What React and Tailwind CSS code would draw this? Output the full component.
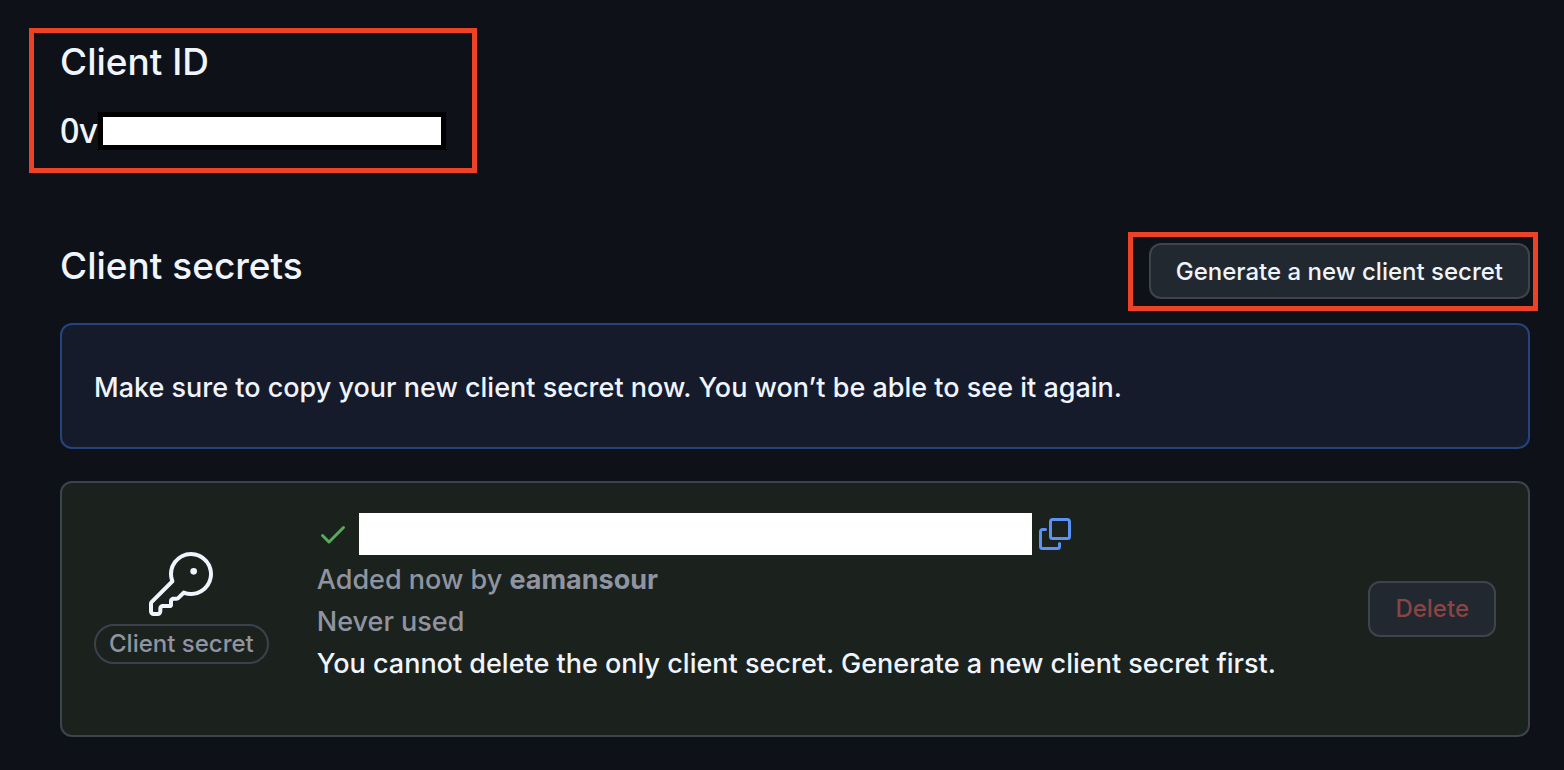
import { GoKey } from "react-icons/go";

function CheckIcon() {
  return (
    <svg viewBox="0 0 16 16" className="size-8 shrink-0 fill-[#57ab5a]" aria-hidden="true">
      <path d="M13.78 4.22a.75.75 0 0 1 0 1.06l-7.25 7.25a.75.75 0 0 1-1.06 0L2.22 9.28a.751.751 0 0 1 .018-1.042.751.751 0 0 1 1.042-.018L6 10.94l6.72-6.72a.75.75 0 0 1 1.06 0Z" />
    </svg>
  );
}

function CopyIcon() {
  return (
    <svg viewBox="0 0 16 16" className="size-8 fill-[#5b93f5]" aria-hidden="true">
      <path d="M0 6.75C0 5.784.784 5 1.75 5h1.5a.75.75 0 0 1 0 1.5h-1.5a.25.25 0 0 0-.25.25v7.5c0 .138.112.25.25.25h7.5a.25.25 0 0 0 .25-.25v-1.5a.75.75 0 0 1 1.5 0v1.5A1.75 1.75 0 0 1 9.25 16h-7.5A1.75 1.75 0 0 1 0 14.25Z" />
      <path d="M5 1.75C5 .784 5.784 0 6.75 0h7.5C15.216 0 16 .784 16 1.75v7.5A1.75 1.75 0 0 1 14.25 11h-7.5A1.75 1.75 0 0 1 5 9.25Zm1.75-.25a.25.25 0 0 0-.25.25v7.5c0 .138.112.25.25.25h7.5a.25.25 0 0 0 .25-.25v-7.5a.25.25 0 0 0-.25-.25Z" />
    </svg>
  );
}

export default function App() {
  return (
    <main className="min-h-screen bg-[#0e1118] pt-7 pr-[34px] pb-8 pl-[60px] font-['Inter',sans-serif] text-[27px] leading-[42px] font-medium text-[#f0f4fc]">
      <section className="-ml-[31px] w-fit border-5 border-[#ec4226] pt-1 pr-[26px] pb-[18px] pl-[26px]">
        <h2 className="text-[37px] leading-[50px]">Client ID</h2>
        <div className="mt-[25px] flex items-center">
          <code className="w-[38px] pb-[2px] font-['Noto_Sans',sans-serif] text-[34px] leading-9">0v</code>
          <span className="h-[38px] w-[348px] border-5 border-black bg-white" />
        </div>
      </section>

      <section className="mt-[59px]">
        <div className="flex items-start justify-between">
          <h2 className="mt-[9px] text-[37px] leading-[50px]">Client secrets</h2>
          <div className="-mr-2 border-5 border-[#ec4226] pt-[6px] pr-[3px] pb-[7px] pl-4">
            <button type="button" className="block h-14 rounded-xl border-2 border-[#3d444d] bg-[#212830] px-[25px] pt-[2px] text-2xl leading-6">
              Generate a new client secret
            </button>
          </div>
        </div>

        <p className="mt-3 rounded-xl border-2 border-[#25447d] bg-[#161b2c] px-8 pt-[42px] pb-[38px]">
          Make sure to copy your new client secret now. You won’t be able to see it again.
        </p>

        <article className="mt-8 flex items-center rounded-xl border-2 border-[#3d444d] bg-[#1b221e] px-8 py-[30px]">
          <div className="mb-[2px] flex flex-col items-center">
            <GoKey className="size-16" aria-hidden="true" />
            <span className="mt-2 rounded-full border-2 border-[#3d414d] px-[13px] text-2xl leading-9 text-[#9094a0]">
              Client secret
            </span>
          </div>
          <div className="ml-12 flex-1 pb-5">
            <div className="mb-1 flex items-center">
              <CheckIcon />
              <span className="ml-[10px] h-[42px] w-[673px] bg-white" />
              <button type="button" aria-label="Copy client secret" className="ml-[7px]">
                <CopyIcon />
              </button>
            </div>
            <p className="text-[#9094a0]">
              Added now by <strong className="font-bold">eamansour</strong>
            </p>
            <p className="text-[#9094a0]">Never used</p>
            <p>You cannot delete the only client secret. Generate a new client secret first.</p>
          </div>
          <button type="button" disabled className="h-14 rounded-xl border-2 border-[#3d444d] bg-[#212830] px-[25px] text-2xl leading-6 text-[#8a4443]">
            Delete
          </button>
        </article>
      </section>
    </main>
  );
}
